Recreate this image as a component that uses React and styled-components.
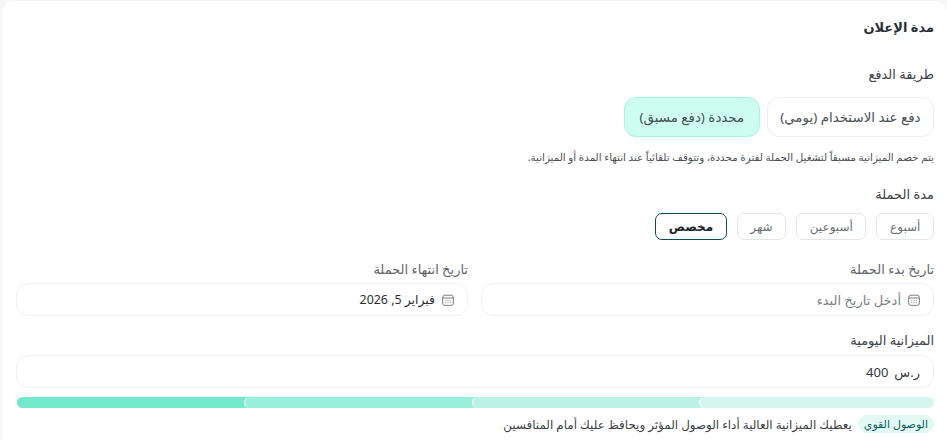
import React from 'react';
import styled, { createGlobalStyle } from 'styled-components';

const Global = createGlobalStyle`
  html, body { margin: 0; padding: 0; background: #f7f7f8; overflow: hidden; }
  body { font-family: "Noto Sans", "Open Sans", "DejaVu Sans", sans-serif; }
  * { box-sizing: border-box; }
`;

const Card = styled.section`
  direction: rtl;
  width: 945px;
  height: 440px;
  margin: 1px 0 0 2px;
  padding: 15px 13px 0 14px;
  background: #fff;
  border-radius: 12px 12px 0 0;
  display: flex;
  flex-direction: column;
  color: #272b2e;
`;

const Title = styled.h2`
  margin: 0;
  font-size: 13px;
  line-height: 22px;
  font-weight: 700;
  color: #2a2f34;
`;

const Label = styled.div`
  font-size: 13px;
  line-height: 18px;
  font-weight: 500;
  color: ${p => p.$muted ? '#5f6468' : '#3d4246'};
`;

const Section = styled.div`
  margin-top: ${p => p.$top}px;
`;

const Row = styled.div`
  display: flex;
  gap: ${p => p.$gap}px;
  margin-top: ${p => p.$top}px;
`;

const PayOption = styled.button`
  font: inherit;
  font-size: 13.4px;
  height: 40px;
  padding: 0 ${p => p.$active ? 14.5 : 12.5}px;
  border-radius: 12px;
  background: ${p => p.$active ? '#ccfdf0' : '#fff'};
  border: 1px solid ${p => p.$active ? '#a9f3df' : '#eceded'};
  color: #4a5054;
`;

const Hint = styled.p`
  margin: 12px 0 0;
  font-size: 10.3px;
  line-height: 16px;
  color: #4a4f53;
`;

const DurationOption = styled.button`
  font: inherit;
  font-size: 12px;
  height: 27px;
  padding: 0 12.6px;
  border-radius: 7px;
  background: #fff;
  border: 1px solid ${p => p.$active ? '#0d4b55' : '#e4e5e6'};
  font-weight: ${p => p.$active ? 700 : 400};
  color: ${p => p.$active ? '#17242a' : '#6a6f73'};
`;

const DateGrid = styled.div`
  display: grid;
  grid-template-columns: 453px 452px;
  gap: 13px;
  margin-top: 20px;
`;

const Field = styled.div`
  height: 33px;
  margin-top: ${p => p.$top || 5}px;
  padding: 0 13px;
  display: flex;
  align-items: center;
  gap: 7px;
  border: 1px solid #eeefef;
  border-radius: 12px;
  background: #fff;
  font-size: ${p => p.$size || 13}px;
  color: ${p => p.$placeholder ? '#7b8084' : '#2b2f33'};
`;

const Cal = () => (
  <svg width="12" height="12" viewBox="0 0 12 12" fill="none" stroke="#6b7075" strokeWidth="0.9" style={{ flexShrink: 0 }}>
    <rect x="0.6" y="1.2" width="10.8" height="10.2" rx="2.4" />
    <path d="M0.8 4h10.4" />
    <path d="M3.4 6.6h.8M5.6 6.6h.8M7.8 6.6h.8M3.4 8.6h.8M5.6 8.6h.8M7.8 8.6h.8" />
  </svg>
);

const Amount = styled.span`
  direction: ltr;
  display: flex;
  gap: 6px;
  color: #33383c;
`;

const Meter = styled.div`
  display: grid;
  grid-template-columns: 233px 228px 227px 1fr;
  height: 11px;
  margin-top: 9px;
  border-radius: 6px;
  overflow: hidden;
  direction: ltr;
  width: 917px;
`;

const Segment = styled.div`
  background: ${p => p.$color};
  ${p => p.$first ? '' : `
    margin-left: -6px;
    border-left: 1px solid #fff;
    border-radius: 6px 0 0 6px;
  `}
`;

const Advice = styled.div`
  display: flex;
  align-items: center;
  gap: 6px;
  margin-top: 7px;
  font-size: 11.9px;
  color: #3a3f43;
`;

const Chip = styled.span`
  height: 18px;
  padding: 0 6px;
  border-radius: 9px;
  background: #e3faf4;
  color: #0f5a5e;
  font-size: 11px;
  line-height: 18px;
`;

export default function App() {
  return (
    <>
      <Global />
      <Card>
        <Title>مدة الإعلان</Title>
        <Section $top={27}><Label>طريقة الدفع</Label></Section>
        <Row $gap={7} $top={14}>
          <PayOption>دفع عند الاستخدام (يومي)</PayOption>
          <PayOption $active>محددة (دفع مسبق)</PayOption>
        </Row>
        <Hint>يتم خصم الميزانية مسبقاً لتشغيل الحملة لفترة محددة، وتتوقف تلقائياً عند انتهاء المدة أو الميزانية.</Hint>
        <Section $top={20}><Label>مدة الحملة</Label></Section>
        <Row $gap={10} $top={10}>
          <DurationOption>أسبوع</DurationOption>
          <DurationOption>أسبوعين</DurationOption>
          <DurationOption>شهر</DurationOption>
          <DurationOption $active>مخصص</DurationOption>
        </Row>
        <DateGrid>
          <div>
            <Label $muted>تاريخ بدء الحملة</Label>
            <Field $placeholder><Cal />أدخل تاريخ البدء</Field>
          </div>
          <div>
            <Label $muted>تاريخ انتهاء الحملة</Label>
            <Field $size={12.4}><Cal />فبراير 5, 2026</Field>
          </div>
        </DateGrid>
        <Section $top={15}><Label>الميزانية اليومية</Label></Section>
        <Field $top={6}><Amount>400 <span>ر.س</span></Amount></Field>
        <Meter>
          <Segment $first $color="#72e9cd" />
          <Segment $color="#98efdb" />
          <Segment $color="#baf3e5" />
          <Segment $color="#d6f7ef" />
        </Meter>
        <Advice>
          <Chip>الوصول القوي</Chip>
          <span>يعطيك الميزانية العالية أداء الوصول المؤثر ويحافظ عليك أمام المنافسين</span>
        </Advice>
      </Card>
    </>
  );
}
